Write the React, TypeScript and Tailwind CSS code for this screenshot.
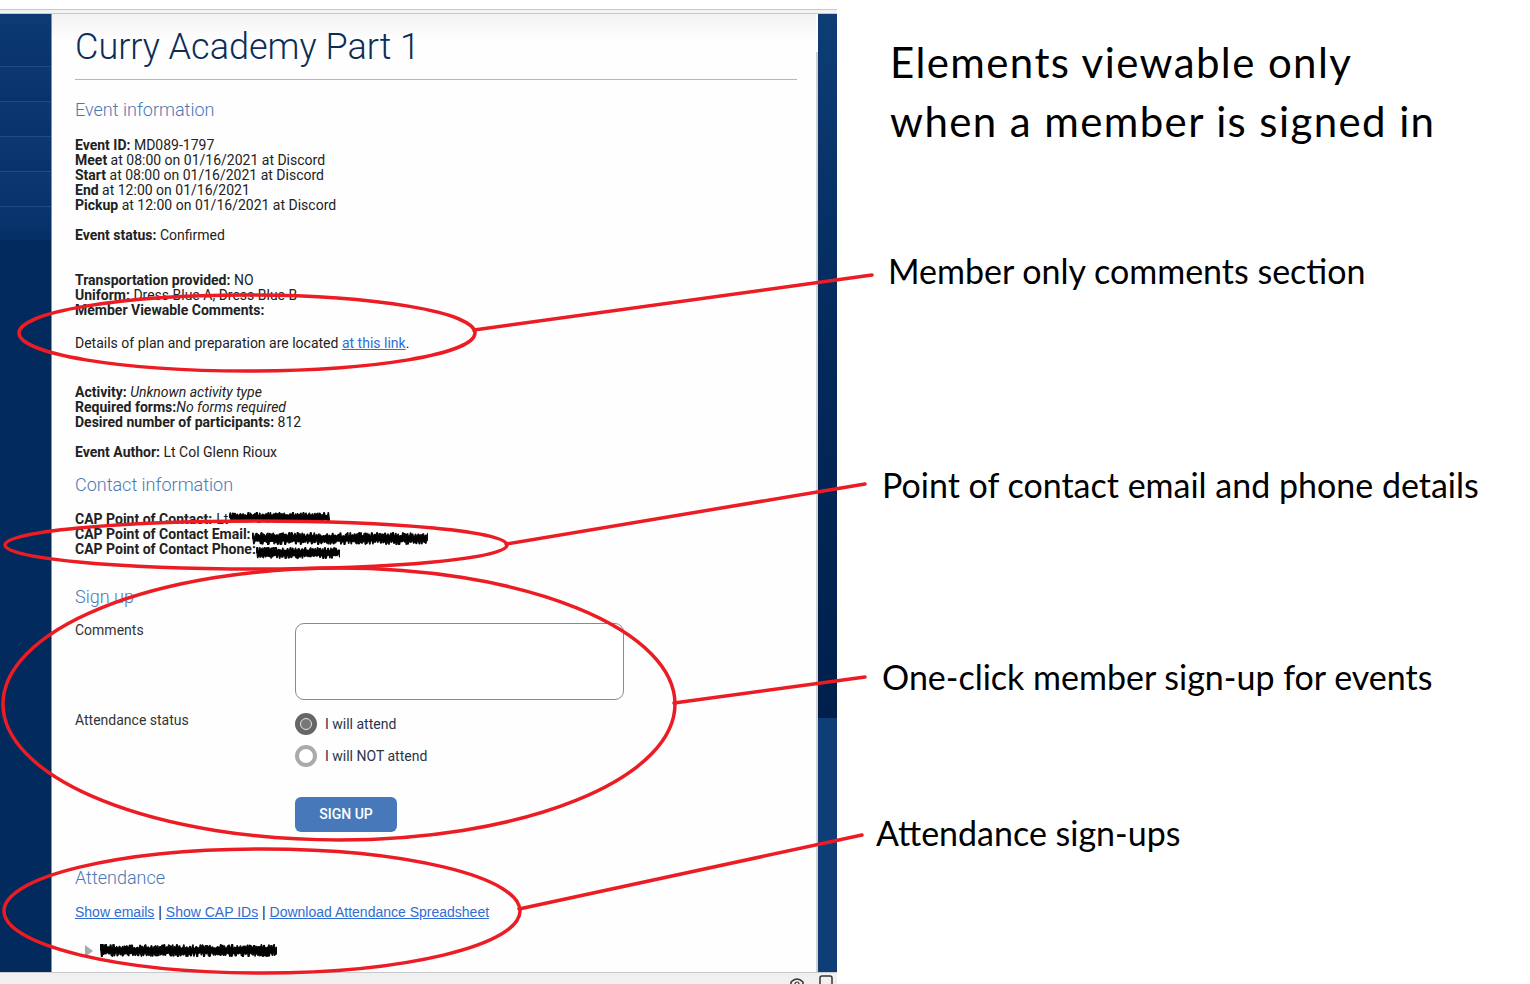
import React from "react";

function makeRand(seed: number) {
  let s = seed;
  return () => {
    s = (s * 9301 + 49297) % 233280;
    return s / 233280;
  };
}

function scribblePath(w: number, h: number, seed: number) {
  const r = makeRand(seed);
  let d = `M0 ${(h / 2).toFixed(1)}`;
  let x = 0;
  while (x < w - 2) {
    x += 0.8 + r() * 1.6;
    const y1 = 0.8 + r() * h * 0.3;
    const y2 = h - 0.8 - r() * h * 0.3;
    d += ` L${x.toFixed(1)} ${y1.toFixed(1)} L${(x + 1).toFixed(1)} ${y2.toFixed(1)}`;
    x += 1;
  }
  return d;
}

function Scribble({ w, h, seed }: { w: number; h: number; seed: number }) {
  return (
    <svg width={w} height={h} viewBox={`0 0 ${w} ${h}`} className="inline-block shrink-0">
      <path d={scribblePath(w, h, seed)} stroke="#000" strokeWidth={2.2} fill="none" strokeLinejoin="round" />
      <path d={scribblePath(w, h, seed + 17)} stroke="#0a0a0a" strokeWidth={1.8} fill="none" strokeLinejoin="round" />
      <rect x={2} y={h * 0.28} width={w - 4} height={h * 0.44} fill="#000" rx={3} />
    </svg>
  );
}

function Sidebar() {
  return (
    <div className="w-[51px] flex flex-col bg-[#022a5c]">
      <div className="h-[53px] bg-gradient-to-b from-[#0e3b75] to-[#08336c] border-b border-[#1f4b84]" />
      <div className="h-[35px] bg-gradient-to-b from-[#0c3871] to-[#08326b] border-b border-[#1f4b84]" />
      <div className="h-[35px] bg-gradient-to-b from-[#0c3871] to-[#08326b] border-b border-[#1f4b84]" />
      <div className="h-[35px] bg-gradient-to-b from-[#0c3871] to-[#08326b] border-b border-[#1f4b84]" />
      <div className="h-[35px] bg-gradient-to-b from-[#0c3871] to-[#08326b] border-b border-[#1f4b84]" />
      <div className="h-[33px] bg-gradient-to-b from-[#0a3670] to-[#052f66]" />
      <div className="flex-1 bg-[#022a5c]" />
    </div>
  );
}

function Main() {
  return (
    <div className="w-[764px] bg-[linear-gradient(to_bottom,#f2f2f2,#fefefe_26px)] pl-[23px] pr-[19px] pt-[12px] text-[#222]">
      <h1 className="text-[36px] leading-[43px] font-light text-[#0b2d58] pb-[10px] border-b border-[#e9b82b]">
        Curry Academy Part 1
      </h1>
      <h2 className="mt-[19px] text-[18px] leading-[21px] font-light text-[#4a78b5]">Event information</h2>
      <div className="mt-[18px] text-[14px] leading-[15px]">
        <div>
          <b>Event ID:</b> MD089-1797
        </div>
        <div>
          <b>Meet</b> at 08:00 on 01/16/2021 at Discord
        </div>
        <div>
          <b>Start</b> at 08:00 on 01/16/2021 at Discord
        </div>
        <div>
          <b>End</b> at 12:00 on 01/16/2021
        </div>
        <div>
          <b>Pickup</b> at 12:00 on 01/16/2021 at Discord
        </div>
      </div>
      <div className="mt-[15px] text-[14px] leading-[15px]">
        <b>Event status:</b> Confirmed
      </div>
      <div className="mt-[30px] text-[14px] leading-[15px]">
        <div>
          <b>Transportation provided:</b> NO
        </div>
        <div>
          <b>Uniform:</b> Dress Blue A, Dress Blue B
        </div>
        <div>
          <b>Member Viewable Comments:</b>
        </div>
        <p className="mt-[18px]">
          Details of plan and preparation are located{" "}
          <a className="text-[#2f6dd5] underline" href="#">
            at this link
          </a>
          .
        </p>
      </div>
      <div className="mt-[34px] text-[14px] leading-[15px]">
        <div>
          <b>Activity:</b> <i>Unknown activity type</i>
        </div>
        <div>
          <b>Required forms:</b>
          <i>No forms required</i>
        </div>
        <div>
          <b>Desired number of participants:</b> 812
        </div>
      </div>
      <div className="mt-[15px] text-[14px] leading-[15px]">
        <b>Event Author:</b> Lt Col Glenn Rioux
      </div>
      <h2 className="mt-[14px] text-[18px] leading-[21px] font-light text-[#4a78b5]">Contact information</h2>
      <div className="mt-[14px] text-[14px] leading-[15px]">
        <div className="flex items-end">
          <b>CAP Point of Contact:</b>
          <span className="ml-[4px]">Lt</span>
          <span className="ml-[1px] mb-[3px]">
            <Scribble w={101} h={11} seed={11} />
          </span>
        </div>
        <div className="flex items-end">
          <b>CAP Point of Contact Email:</b>
          <span className="ml-[1px] -mb-[3px]">
            <Scribble w={176} h={13} seed={29} />
          </span>
        </div>
        <div className="flex items-end">
          <b>CAP Point of Contact Phone:</b>
          <span className="-mb-[3px]">
            <Scribble w={84} h={12} seed={53} />
          </span>
        </div>
      </div>
      <h2 className="mt-[29px] text-[18px] leading-[21px] font-light text-[#4a78b5]">Sign up</h2>
      <div className="mt-[16px] flex text-[14px] leading-[15px] text-[#333]">
        <div className="w-[220px]">Comments</div>
        <div className="w-[329px] h-[77px] rounded-[9px] border border-[#8a8a8a] bg-white" />
      </div>
      <div className="mt-[13px] flex text-[14px] leading-[15px] text-[#333]">
        <div className="w-[220px]">Attendance status</div>
        <div className="flex flex-col">
          <div className="flex items-center gap-[8px]">
            <span className="w-[22px] h-[22px] rounded-full bg-[#666] flex items-center justify-center">
              <span className="w-[12px] h-[12px] rounded-full border-[1.5px] border-[#e6e6e6] bg-[#777]" />
            </span>
            <span className="text-[#2b3447]">I will attend</span>
          </div>
          <div className="mt-[10px] flex items-center gap-[8px]">
            <span className="w-[22px] h-[22px] rounded-full border-[4px] border-[#aaaaaa] bg-white" />
            <span className="text-[#2b3447]">I will NOT attend</span>
          </div>
          <button className="mt-[30px] w-[102px] h-[35px] rounded-[6px] bg-[#4778b9] text-white text-[14px] font-medium">
            SIGN UP
          </button>
        </div>
      </div>
      <h2 className="mt-[35px] text-[18px] leading-[21px] font-light text-[#4a78b5]">Attendance</h2>
      <div className="mt-[16px] text-[14px] leading-[16px] font-['Liberation_Sans',Arial,sans-serif] text-[#222]">
        <a className="text-[#2f6dd5] underline" href="#">
          Show emails
        </a>{" "}
        |{" "}
        <a className="text-[#2f6dd5] underline" href="#">
          Show CAP IDs
        </a>{" "}
        |{" "}
        <a className="text-[#2f6dd5] underline" href="#">
          Download Attendance Spreadsheet
        </a>
      </div>
      <div className="mt-[24px] ml-[10px] flex items-center gap-[7px]">
        <svg width="8" height="12" viewBox="0 0 8 12">
          <path d="M0 0 L8 6 L0 12 Z" fill="#a9a9a9" />
        </svg>
        <Scribble w={177} h={13} seed={71} />
      </div>
    </div>
  );
}

function RightBar() {
  return (
    <>
      <div className="w-[2px] flex flex-col">
        <div className="h-[38px] bg-white" />
        <div className="flex-1 bg-[#d2d2d2]" />
      </div>
      <div className="w-[19px] flex flex-col bg-[#0f3d78]">
        <div className="h-[704px] bg-gradient-to-b from-[#0e3d76] via-[#03285a] to-[#00204b]" />
        <div className="flex-1 bg-[#0f3d78]" />
      </div>
    </>
  );
}

function LeftPanel() {
  return (
    <div className="w-[837px] h-full flex flex-col shrink-0">
      <div className="h-[9px] bg-white" />
      <div className="h-[5px] border-y border-[#c9c9c9] bg-[#f2f2f2]" />
      <div className="flex-1 flex overflow-hidden">
        <Sidebar />
        <div className="w-px bg-[#7a93b8]" />
        <Main />
        <RightBar />
      </div>
      <div className="h-[12px] border-t border-[#c9c9c9] bg-[#f0f0f0] flex justify-end items-start pr-[4px] gap-[14px] overflow-hidden">
        <svg width="16" height="12" viewBox="0 0 16 12" className="mt-[2px]">
          <path d="M2 12 V7 Q8 1 14 7 V12" stroke="#333" strokeWidth="1.5" fill="none" />
          <circle cx="8" cy="9" r="2" stroke="#333" strokeWidth="1.2" fill="none" />
        </svg>
        <svg width="14" height="12" viewBox="0 0 14 12" className="mt-[2px]">
          <rect x="1" y="1" width="12" height="14" rx="2" stroke="#333" strokeWidth="1.5" fill="none" />
        </svg>
      </div>
    </div>
  );
}

function Annotations() {
  return (
    <div className="flex-1 flex flex-col pt-[33px] font-['Lato',sans-serif] text-black">
      <div className="ml-[53px] text-[42px] leading-[59px] tracking-[1.4px]">
        <div>Elements viewable only</div>
        <div>when a member is signed in</div>
      </div>
      <div className="ml-[51px] mt-[100px] text-[34px] leading-[40px]">Member only comments section</div>
      <div className="ml-[45px] mt-[174px] text-[34px] leading-[40px]">Point of contact email and phone details</div>
      <div className="ml-[45px] mt-[152px] text-[34px] leading-[40px]">One-click member sign-up for events</div>
      <div className="ml-[39px] mt-[116px] text-[34px] leading-[40px]">Attendance sign-ups</div>
    </div>
  );
}

function Overlay() {
  const s = { stroke: "#ec1c24", strokeWidth: 3.5, fill: "none" };
  return (
    <svg className="absolute inset-0 pointer-events-none" width="1530" height="984" viewBox="0 0 1530 984">
      <ellipse cx="247" cy="333" rx="228" ry="38" {...s} />
      <path d="M474 330 L872 275" {...s} strokeLinecap="round" />
      <ellipse cx="256" cy="545" rx="251" ry="24" {...s} />
      <path d="M506 544 L865 484" {...s} strokeLinecap="round" />
      <ellipse cx="339" cy="704" rx="336" ry="136" {...s} />
      <path d="M674 703 L865 677" {...s} strokeLinecap="round" />
      <ellipse cx="262" cy="911" rx="258" ry="62" {...s} />
      <path d="M519 909 L862 835" {...s} strokeLinecap="round" />
    </svg>
  );
}

export default function App() {
  return (
    <div className="relative w-[1530px] h-[984px] bg-white overflow-hidden flex font-['Roboto',sans-serif]">
      <LeftPanel />
      <Annotations />
      <Overlay />
    </div>
  );
}
